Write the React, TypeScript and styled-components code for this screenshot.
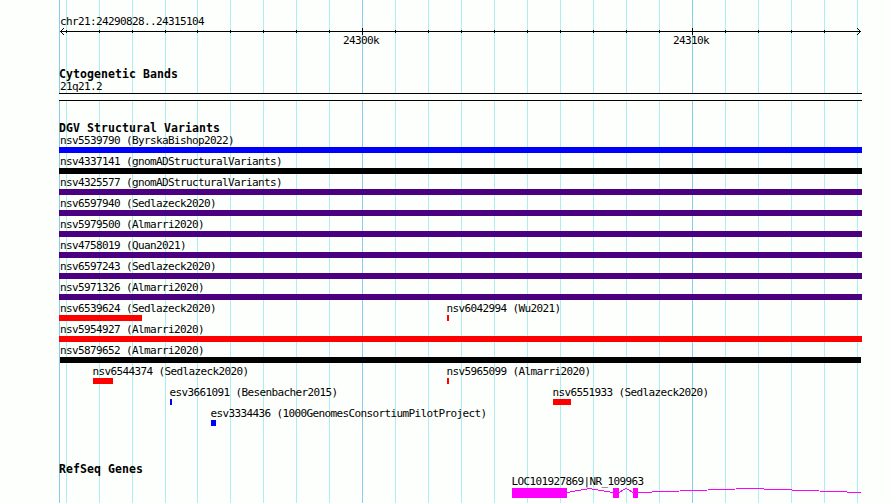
import React from "react";
import styled, { createGlobalStyle } from "styled-components";

const GlobalStyle = createGlobalStyle`
  body { margin: 0; background: #fdfffc; }
`;

const ORIGIN = 59;
const WIDTH = 803;

const Panel = styled.main`
  position: relative;
  box-sizing: border-box;
  width: 890px;
  height: 503px;
  padding-left: ${ORIGIN}px;
  overflow: hidden;
  background: #fdfffc;
  color: #000;
`;

const GridLines = styled.svg`
  position: absolute;
  inset: 0;
  pointer-events: none;
`;

const Tracks = styled.div`
  position: relative;
  display: flex;
  flex-direction: column;
  width: ${WIDTH}px;
`;

const Label = styled.div`
  height: 13px;
  padding-left: 1px;
  font: 11px/13px "DejaVu Sans Mono", monospace;
  letter-spacing: -0.622px;
  white-space: pre;
`;

const Heading = styled.h2`
  margin: 0;
  height: 12px;
  font: bold 11.5px/13px "DejaVu Sans Mono", monospace;
  letter-spacing: 0.077px;
  white-space: pre;
`;

const Ruler = styled.section`
  height: 68px;
  padding-top: 15px;
  box-sizing: border-box;
`;

const Axis = styled.svg`
  display: block;
  height: 7px;
  width: 100%;
`;

const AxisLabels = styled.div`
  display: flex;
  gap: 293px;
  padding-left: 283px;
  margin-top: -1px;
`;

const Cytoband = styled.section`
  height: 54px;
`;

const Band = styled.div`
  box-sizing: border-box;
  height: 8px;
  border: solid #000;
  border-width: 1px 0;
  background: #fdfffc;
`;

const Variants = styled.section`
  height: 341px;
`;

const Row = styled.div`
  display: flex;
  height: 21px;
`;

const Feature = styled.div<{ $gap: number; $size: number }>`
  flex: none;
  width: ${(p) => p.$size}px;
  margin-left: ${(p) => p.$gap}px;
`;

const Bar = styled.div<{ $color: string }>`
  height: 6px;
  background: ${(p) => p.$color};
`;

const Genes = styled.section`
  height: 40px;
`;

const GeneLabel = styled(Label)`
  margin-left: 451.5px;
`;

const AxisLabel = styled(Label)`
  width: 36px;
`;

const GeneModel = styled.svg`
  display: block;
  width: 100%;
  height: 10px;
`;

type Variant = { name: string; start: number; end: number; color: string };

const BLUE = "#0000ff";
const BLACK = "#000000";
const PURPLE = "#4b0082";
const RED = "#ff0000";

const full = (name: string, color: string): Variant[] => [{ name, start: 0, end: WIDTH, color }];

const rows: Variant[][] = [
  full("nsv5539790 (ByrskaBishop2022)", BLUE),
  full("nsv4337141 (gnomADStructuralVariants)", BLACK),
  full("nsv4325577 (gnomADStructuralVariants)", PURPLE),
  full("nsv6597940 (Sedlazeck2020)", PURPLE),
  full("nsv5979500 (Almarri2020)", PURPLE),
  full("nsv4758019 (Quan2021)", PURPLE),
  full("nsv6597243 (Sedlazeck2020)", PURPLE),
  full("nsv5971326 (Almarri2020)", PURPLE),
  [
    { name: "nsv6539624 (Sedlazeck2020)", start: 0, end: 83, color: RED },
    { name: "nsv6042994 (Wu2021)", start: 388, end: 390, color: RED },
  ],
  full("nsv5954927 (Almarri2020)", RED),
  [{ name: "nsv5879652 (Almarri2020)", start: 1, end: 802, color: BLACK }],
  [
    { name: "nsv6544374 (Sedlazeck2020)", start: 34, end: 54, color: RED },
    { name: "nsv5965099 (Almarri2020)", start: 388, end: 390, color: RED },
  ],
  [
    { name: "esv3661091 (Besenbacher2015)", start: 111, end: 113, color: BLUE },
    { name: "nsv6551933 (Sedlazeck2020)", start: 494, end: 512, color: RED },
  ],
  [{ name: "esv3334436 (1000GenomesConsortiumPilotProject)", start: 152, end: 157, color: BLUE }],
];

const FeatureLabel = styled(Label)<{ $start: number }>`
  padding-left: ${(p) => Math.max(0, 1 - p.$start)}px;
  margin-left: ${(p) => (p.$start > 1 ? -0.5 : 0)}px;
`;

const majorLines = [0, 303, 633];
const minorLines = [
  7, 40, 73, 106, 138, 171, 204, 237, 270, 336, 369, 402, 435, 468, 501, 534, 567, 600, 666, 699, 732, 765, 798,
];

export default function App() {
  return (
    <>
      <GlobalStyle />
      <Panel>
        <GridLines width="890" height="503" shapeRendering="crispEdges">
          {minorLines.map((x) => (
            <rect key={x} x={ORIGIN + x} width="1" height="503" fill="#afeeee" />
          ))}
          {majorLines.map((x) => (
            <rect key={x} x={ORIGIN + x} width="1" height="503" fill="#87ceeb" />
          ))}
        </GridLines>
        <Tracks>
          <Ruler>
            <Label>chr21:24290828..24315104</Label>
            <Axis viewBox="0 0 803 7" shapeRendering="crispEdges">
              <rect x="1" y="3" width="801" height="1" />
              {minorLines.slice(0, -1).map((x) => (
                <rect key={x} x={x} y="2" width="1" height="3" />
              ))}
              {majorLines.slice(1).map((x) => (
                <rect key={x} x={x} y="0" width="1" height="7" />
              ))}
              <path d="M2 2h1v3h-1zM3 1h1v1h-1zM4 0h1v1h-1zM3 5h1v1h-1zM4 6h1v1h-1z" />
              <path d="M800 2h1v3h-1zM799 1h1v1h-1zM798 0h1v1h-1zM799 5h1v1h-1zM798 6h1v1h-1z" />
            </Axis>
            <AxisLabels>
              <AxisLabel>24300k</AxisLabel>
              <AxisLabel>24310k</AxisLabel>
            </AxisLabels>
          </Ruler>
          <Cytoband>
            <Heading>Cytogenetic Bands</Heading>
            <Label>21q21.2</Label>
            <Band />
          </Cytoband>
          <Variants>
            <Heading>DGV Structural Variants</Heading>
            {rows.map((row, i) => (
              <Row key={i}>
                {row.map((v, j) => (
                  <Feature key={v.name} $gap={v.start - (j ? row[j - 1].end : 0)} $size={v.end - v.start}>
                    <FeatureLabel $start={v.start}>{v.name}</FeatureLabel>
                    <Bar $color={v.color} />
                  </Feature>
                ))}
              </Row>
            ))}
          </Variants>
          <Genes>
            <Heading>RefSeq Genes</Heading>
            <GeneLabel>LOC101927869|NR_109963</GeneLabel>
            <GeneModel viewBox="0 0 803 10" shapeRendering="crispEdges" fill="#ff00ff">
              <rect x="453" width="55" height="10" />
              <rect x="554" width="6" height="10" />
              <rect x="574" width="5" height="10" />
              <path
                d="M508 4.5L530.5 .5L554 4.5M560 4.5L567 .5L574 4.5M579 4.5L690.5 .5L802 4.5"
                fill="none"
                stroke="#ff00ff"
              />
            </GeneModel>
          </Genes>
        </Tracks>
      </Panel>
    </>
  );
}
